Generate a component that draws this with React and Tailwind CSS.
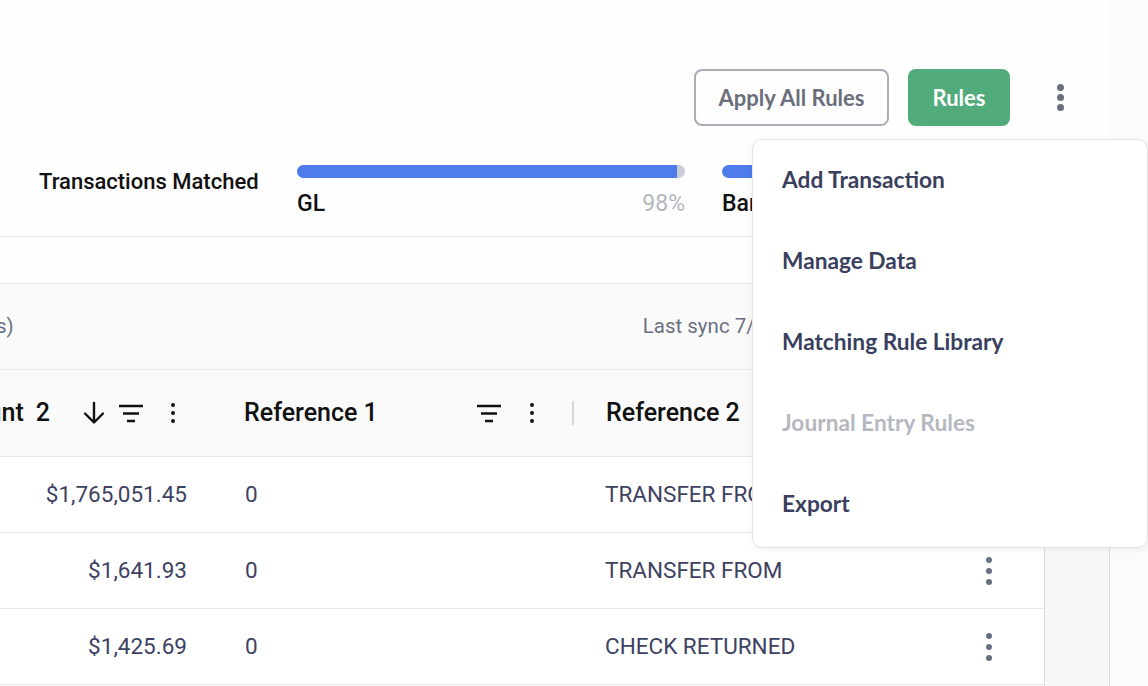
import React from 'react'

const MENU_ITEMS = [
  { label: 'Add Transaction' },
  { label: 'Manage Data' },
  { label: 'Matching Rule Library' },
  { label: 'Journal Entry Rules', disabled: true },
  { label: 'Export' },
]

const ROWS = [
  { amount: '$1,765,051.45', ref1: '0', ref2: 'TRANSFER FROM' },
  { amount: '$1,641.93', ref1: '0', ref2: 'TRANSFER FROM' },
  { amount: '$1,425.69', ref1: '0', ref2: 'CHECK RETURNED' },
]

const sans = "font-['Roboto','Liberation_Sans',sans-serif]"
const lato = "font-['Lato','Liberation_Sans',sans-serif]"

// vertical three dots
function Kebab({ dot = 6, gap = 5, color = '#6b7080' }) {
  return (
    <div className="flex flex-col items-center" style={{ gap }}>
      {[0, 1, 2].map((i) => (
        <span key={i} className="block rounded-full" style={{ width: dot, height: dot, background: color }} />
      ))}
    </div>
  )
}

function FilterIcon() {
  return (
    <svg width="24" height="20" viewBox="0 0 24 20" fill="none" stroke="#111" strokeWidth="2.4" strokeLinecap="butt">
      <path d="M0 3h24M4 10.5h16M8 18h8" />
    </svg>
  )
}

function ArrowDownIcon() {
  return (
    <svg width="22" height="24" viewBox="0 0 22 24" fill="none" stroke="#111" strokeWidth="2.4" strokeLinecap="round" strokeLinejoin="round">
      <path d="M11 2v19M2 12.5l9 9 9-9" />
    </svg>
  )
}

function Separator() {
  return <span className="block w-[2px] h-[24px] bg-[#d8d8da]" />
}

export default function App() {
  return (
    <div className="relative w-[1148px] h-[686px] overflow-hidden bg-[#fefefe] flex">
      <main className="w-[1110px] flex flex-col shrink-0">
        {/* top actions */}
        <div className={`h-[139px] flex justify-end items-start pt-[69px] pr-[30px] ${lato}`}>
          <button className="h-[57px] w-[195px] rounded-[8px] border-2 border-[#a9adb6] text-[#6b6f7b] text-[22px] font-bold">
            Apply All Rules
          </button>
          <button className="ml-[19px] h-[57px] w-[102px] rounded-[8px] bg-[#52ab7a] text-white text-[22px] font-bold">
            Rules
          </button>
          <div className="ml-[30px] w-[40px] h-[57px] flex items-center justify-center">
            <Kebab dot={7} gap={3} color="#6b6f7b" />
          </div>
        </div>

        {/* matched summary */}
        <div className={`h-[98px] border-b border-[#e6e7ea] flex items-start ${sans}`}>
          <div className="w-[297px] pl-[39px] pt-[26px] text-[22px] font-medium text-[#111]">Transactions Matched</div>
          <div className="w-[388px] pt-[26px]">
            <div className="h-[13px] rounded-full bg-[#c9cdd8] overflow-hidden">
              <div className="h-full w-[98%] bg-[#4f7cec]" />
            </div>
            <div className="mt-[11px] flex justify-between items-center text-[23px] leading-[30px]">
              <span className="font-medium text-[#111]">GL</span>
              <span className="text-[#b3b6bd]">98%</span>
            </div>
          </div>
          <div className="ml-[37px] w-[388px] pt-[26px]">
            <div className="h-[13px] rounded-full bg-[#4f7cec]" />
            <div className="mt-[11px] text-[23px] leading-[30px] font-medium text-[#111]">Bank</div>
          </div>
        </div>

        <div className="h-[46px]" />

        {/* table */}
        <div className={`flex flex-1 ${sans}`}>
          <div className="w-[1044px] flex flex-col">
            <div className="h-[87px] bg-[#fafafa] border-y border-[#e6e7ea] flex items-center text-[20.5px] text-[#6b7080]">
              <span className="-ml-[4px]">s)</span>
              <span className="ml-[629px] whitespace-nowrap">Last sync 7/21/2023</span>
            </div>

            <div className="h-[87px] bg-[#fafafa] border-b border-[#e6e7ea] flex items-center text-[25px] font-medium text-[#111]">
              <div className="w-[212px] flex items-center justify-end overflow-hidden">
                <span className="whitespace-nowrap">Amount</span>
                <span className="ml-[12px]">2</span>
                <span className="ml-[33px] flex"><ArrowDownIcon /></span>
                <span className="ml-[14px] flex"><FilterIcon /></span>
                <span className="ml-[28px] mr-[37px] flex"><Kebab dot={4} gap={4} color="#111" /></span>
                <Separator />
              </div>
              <div className="w-[362px] flex items-center pl-[32px]">
                <span className="flex-1">Reference 1</span>
                <FilterIcon />
                <span className="ml-[29px] mr-[38px] flex"><Kebab dot={4} gap={4} color="#111" /></span>
                <Separator />
              </div>
              <div className="flex-1 pl-[32px]">Reference 2</div>
            </div>

            {ROWS.map((row, i) => (
              <div key={i} className="h-[76px] bg-white border-b border-[#e6e7ea] flex items-center text-[22.5px] text-[#3e4262]">
                <div className="w-[212px] text-right pr-[25px]">{row.amount}</div>
                <div className="w-[360px] pl-[33px]">{row.ref1}</div>
                <div className="w-[362px] pl-[33px]">{row.ref2}</div>
                <div className="flex-1 flex justify-center">
                  <Kebab dot={6} gap={5} />
                </div>
              </div>
            ))}
          </div>
          <div className="w-[66px] bg-[#f8f8f9] border-x border-[#dcdcde]" />
        </div>
      </main>
      <aside className="flex-1 bg-[#fbfbfb]" />

      {/* actions menu */}
      <div className={`absolute left-[752px] top-[139px] w-[396px] py-[1px] bg-white border border-[#e1e3e9] rounded-[10px] shadow-[0_2px_6px_rgba(30,35,60,0.06)] ${lato}`}>
        {MENU_ITEMS.map((item) => (
          <div
            key={item.label}
            className={`h-[81px] flex items-center pl-[29px] pb-[2px] text-[22.7px] font-bold ${
              item.disabled ? 'text-[#b5b8c1]' : 'text-[#3a3f5e]'
            }`}
          >
            {item.label}
          </div>
        ))}
      </div>
    </div>
  )
}
